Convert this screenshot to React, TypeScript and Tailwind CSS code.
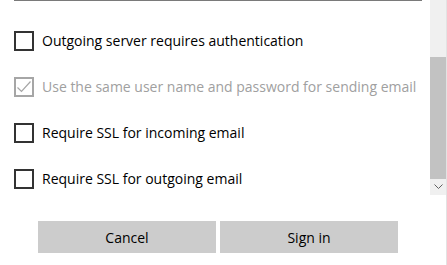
import React from "react";

const Box = ({ checked, disabled }: { checked?: boolean; disabled?: boolean }) => (
  <div
    className={`w-5 h-5 shrink-0 border-2 flex items-center justify-center ${
      disabled ? "border-[#a6a6a6]" : "border-[#333333]"
    }`}
  >
    {checked && (
      <svg width="16" height="16" viewBox="0 0 16 16" fill="none">
        <path d="M1.5 8.5 L5.5 12.5 L14.5 2.5" stroke="#a6a6a6" strokeWidth="1.2" />
      </svg>
    )}
  </div>
);

const Row = ({ label, checked, disabled }: { label: string; checked?: boolean; disabled?: boolean }) => (
  <div className="h-[46px] flex items-center pl-[14px] gap-2">
    <Box checked={checked} disabled={disabled} />
    <span className={`text-[14px] leading-5 whitespace-nowrap ${disabled ? "text-[#a0a0a0]" : "text-black"}`}>
      {label}
    </span>
  </div>
);

const App = () => {
  return (
    <div
      className="w-[447px] h-[265px] bg-white flex flex-col overflow-hidden border-r border-[#e3e3e3]"
      style={{ fontFamily: '"Open Sans", sans-serif' }}
    >
      <div className="flex h-[195px]">
        <div className="flex-1 overflow-hidden">
          <div className="ml-[14px] w-[408px] h-px bg-[#7a7a7a]"></div>
          <div className="pt-[17px]">
            <Row label="Outgoing server requires authentication" />
            <Row label="Use the same user name and password for sending email" checked disabled />
            <Row label="Require SSL for incoming email" />
            <Row label="Require SSL for outgoing email" />
          </div>
        </div>
        <div className="w-4 bg-[#f0f0f0] flex flex-col">
          <div className="h-[57px]"></div>
          <div className="h-[122px] bg-[#c2c2c2]"></div>
          <div className="h-4 flex items-center justify-center">
            <svg width="9" height="6" viewBox="0 0 9 6" fill="none">
              <path d="M0.5 0.5 L4.5 4.5 L8.5 0.5" stroke="#606060" strokeWidth="1" />
            </svg>
          </div>
        </div>
      </div>
      <div className="flex gap-1 pl-[38px] mt-[26px]">
        <button className="w-[178px] h-8 bg-[#cccccc] text-[14px] text-black">Cancel</button>
        <button className="w-[178px] h-8 bg-[#cccccc] text-[14px] text-black">Sign in</button>
      </div>
    </div>
  );
};

export default App;
